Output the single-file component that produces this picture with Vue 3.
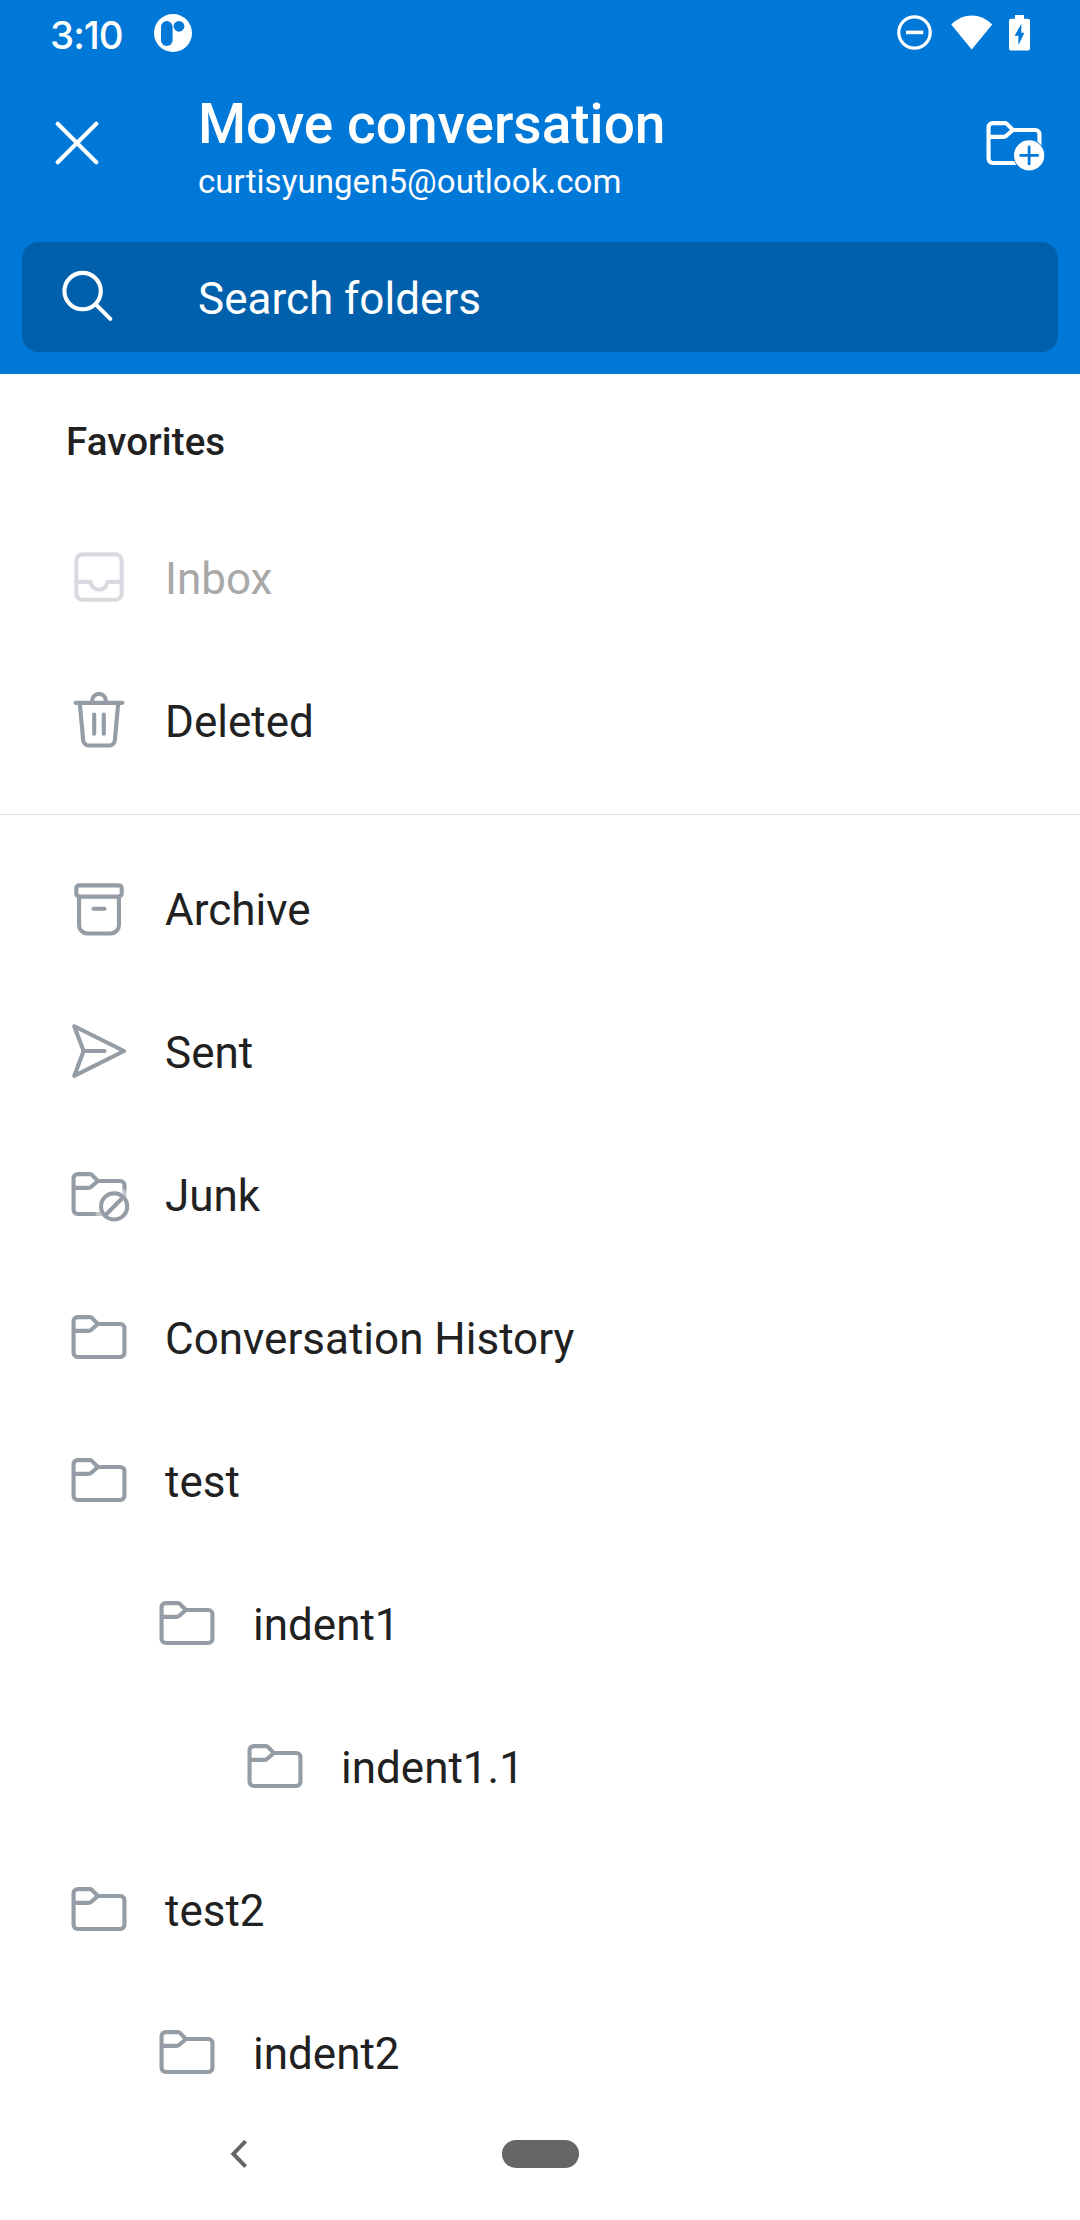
<script setup>
const favorites = [
  { name: 'Inbox', icon: 'inbox', level: 0, disabled: true },
  { name: 'Deleted', icon: 'trash', level: 0 },
]
const folders = [
  { name: 'Archive', icon: 'archive', level: 0 },
  { name: 'Sent', icon: 'sent', level: 0 },
  { name: 'Junk', icon: 'junk', level: 0 },
  { name: 'Conversation History', icon: 'folder', level: 0 },
  { name: 'test', icon: 'folder', level: 0 },
  { name: 'indent1', icon: 'folder', level: 1 },
  { name: 'indent1.1', icon: 'folder', level: 2 },
  { name: 'test2', icon: 'folder', level: 0 },
  { name: 'indent2', icon: 'folder', level: 1 },
]
const groups = [favorites, folders]

const folderPath =
  'M11.6 7.25H19.75a1.5 1.5 0 0 1 1.5 1.5v9a1.5 1.5 0 0 1-1.5 1.5H4.25a1.5 1.5 0 0 1-1.5-1.5V6.25a1.5 1.5 0 0 1 1.5-1.5H8.6a1.2 1.2 0 0 1 .8.3zL9.2 9.35a1.5 1.5 0 0 1-.95.4H2.75'
const paths = {
  inbox: [
    'M6 3.75h12A2.25 2.25 0 0 1 20.25 6v12A2.25 2.25 0 0 1 18 20.25H6A2.25 2.25 0 0 1 3.75 18V6A2.25 2.25 0 0 1 6 3.75z',
    'M3.75 13.75H9a3 2.9 0 0 0 6 0h5.25',
  ],
  trash: [
    'M3.5 5.75h17',
    'M9.5 5.75V5a2.5 2.5 0 0 1 5 0v.75',
    'M5 5.75l1.25 13.7a2 2 0 0 0 2 1.8h7.5a2 2 0 0 0 2-1.8L19 5.75',
    'M10.25 10v7M13.75 10v7',
  ],
  archive: [
    'M4.75 3.75h14.5a1 1 0 0 1 1 1v2.1a1 1 0 0 1-1 1H4.75a1 1 0 0 1-1-1v-2.1a1 1 0 0 1 1-1z',
    'M4.75 7.85v10.4a3 3 0 0 0 3 3h8.5a3 3 0 0 0 3-3V7.85',
    'M10 12.25h4',
  ],
  sent: ['M3 3l18.1 9L3 21.05 6.4 12z', 'M6.4 12h7.6'],
  folder: [folderPath],
}
</script>

<template>
  <div class="screen">
    <header class="header">
      <div class="status">
        <span class="clock">3:10</span>
        <svg class="app-badge" width="38" height="38" viewBox="0 0 38 38">
          <circle cx="19" cy="19" r="19" fill="#fff" />
          <rect x="7" y="7" width="11.6" height="25" rx="5.8" fill="#0078d8" />
          <circle cx="25" cy="12.3" r="5.4" fill="#0078d8" />
        </svg>
        <svg class="status-icons" width="120" height="38" viewBox="896 14 120 38">
          <circle cx="913.5" cy="32.5" r="15.7" fill="none" stroke="#fff" stroke-width="3.2" />
          <path d="M905 32.4h17.3" stroke="#fff" stroke-width="3.6" />
          <path d="M950.2 24.6Q959 15.4 970.7 15.4T991.2 24.6L970.7 49.5z" fill="#fff" />
        </svg>
        <svg class="battery" width="21" height="36" viewBox="0 0 21 36">
          <path
            fill="#fff"
            fill-rule="evenodd"
            d="M6 0h9v3.8h4a2 2 0 0 1 2 2v27.7a2 2 0 0 1-2 2H2a2 2 0 0 1-2-2V5.8a2 2 0 0 1 2-2h4zM12.3 8.8L5.6 20.8H9.4V30.2L15.4 17.8H12.3z"
          />
        </svg>
      </div>

      <div class="toolbar">
        <svg class="close" width="44" height="44" viewBox="-22 -22 44 44">
          <path d="M-19.3-19.3l38.6 38.6M19.3-19.3l-38.6 38.6" />
        </svg>
        <div class="titles">
          <h1>Move conversation</h1>
          <p>curtisyungen5@outlook.com</p>
        </div>
        <svg class="new-folder" width="66" height="66" viewBox="0 0 24 24">
          <mask id="addGap">
            <rect width="24" height="24" fill="#fff" />
            <circle cx="17.5" cy="16.5" r="6.5" fill="#000" />
          </mask>
          <path :d="folderPath" mask="url(#addGap)" />
          <circle class="disc" cx="17.5" cy="16.5" r="5.5" />
          <path class="plus" d="M17.5 13.4v6.2M14.4 16.5h6.2" />
        </svg>
      </div>

      <div class="search">
        <svg width="54" height="54" viewBox="60 268 54 54">
          <circle cx="82.6" cy="291.1" r="18.2" />
          <path d="M96 304.6l14.3 14.3" />
        </svg>
        <span>Search folders</span>
      </div>
    </header>

    <main class="list">
      <h2>Favorites</h2>
      <section v-for="(group, g) in groups" :key="g" class="group">
        <div
          v-for="item in group"
          :key="item.name"
          class="row"
          :class="['level-' + item.level, { disabled: item.disabled }]"
        >
          <svg class="icon" width="66" height="66" viewBox="0 0 24 24">
            <template v-if="item.icon === 'junk'">
              <mask id="junkGap">
                <rect width="24" height="24" fill="#fff" />
                <circle cx="17.5" cy="16.5" r="6.4" fill="#000" />
              </mask>
              <path :d="folderPath" mask="url(#junkGap)" />
              <circle cx="17.5" cy="16.5" r="4.75" />
              <path d="M14.2 19.8l6.6-6.6" />
            </template>
            <template v-else>
              <path v-for="d in paths[item.icon]" :key="d" :d="d" />
            </template>
          </svg>
          <span>{{ item.name }}</span>
        </div>
      </section>
    </main>

    <nav class="navbar">
      <svg width="18" height="30" viewBox="0 0 18 30">
        <path d="M15.6 2.2L3.4 14.9l12.2 12.7" fill="none" stroke="#666" stroke-width="4" />
      </svg>
      <div class="home"></div>
    </nav>
  </div>
</template>

<style>
body {
  margin: 0;
  background: #fff;
}
</style>

<style scoped>
.screen {
  width: 1080px;
  height: 2220px;
  display: flex;
  flex-direction: column;
  overflow: hidden;
  background: #fff;
  color: #212121;
  font-family: Roboto, sans-serif;
}
.header {
  box-sizing: border-box;
  height: 374px;
  flex: none;
  background: #0078d8;
  color: #fff;
}
.status {
  box-sizing: border-box;
  height: 66px;
  padding: 14px 50px 0 50px;
  display: flex;
  align-items: flex-start;
}
.clock {
  width: 104px;
  font: 500 38.5px/42px Inter, sans-serif;
  letter-spacing: -1px;
}
.status-icons {
  margin-left: auto;
}
.battery {
  margin: 1px 0 0 -8px;
}
.toolbar {
  height: 176px;
  display: flex;
  align-items: flex-start;
}
.close {
  margin: 55px 0 0 55px;
}
.close path,
.search svg {
  fill: none;
  stroke: #fff;
  stroke-width: 4.1;
  stroke-linecap: round;
}
.titles {
  margin: 25px 0 0 99px;
}
h1,
h2,
p {
  margin: 0;
}
h1 {
  font-size: 55px;
  font-weight: 500;
  line-height: 66px;
}
p {
  font-size: 33px;
  line-height: 40px;
  margin-top: 5px;
  letter-spacing: 0.07px;
}
.new-folder {
  margin: 44px 33px 0 auto;
  fill: none;
  stroke: #fff;
  stroke-width: 1.5;
}
.new-folder .disc {
  fill: #fff;
  stroke: none;
}
.new-folder .plus {
  stroke: #0078d8;
  stroke-width: 1;
  stroke-linecap: round;
}
.search {
  box-sizing: border-box;
  height: 110px;
  margin: 0 22px;
  padding: 4px 0 0 38px;
  border-radius: 16.5px;
  background: #0060ac;
  display: flex;
  align-items: center;
  font-size: 44px;
}
.search svg {
  margin: -8px 84px 0 0;
}
.list {
  flex: 1;
  min-height: 0;
  overflow: hidden;
}
h2 {
  box-sizing: border-box;
  height: 132px;
  padding-left: 66px;
  font-size: 38.5px;
  font-weight: 500;
  line-height: 136px;
  letter-spacing: 0.1px;
}
.group + .group {
  margin-top: 22px;
  padding-top: 22px;
  border-top: 1px solid #e0e0e0;
}
.row {
  height: 143px;
  padding-left: 66px;
  display: flex;
  align-items: flex-start;
  font-size: 44px;
  line-height: 147px;
}
.level-1 {
  padding-left: 154px;
}
.level-2 {
  padding-left: 242px;
}
.icon {
  margin: 38px 33px 0 0;
  flex: none;
  fill: none;
  stroke: #949ca5;
  stroke-width: 1.5;
  stroke-linecap: round;
  stroke-linejoin: round;
}
.disabled {
  color: #a8a8a8;
}
.disabled .icon {
  stroke: #d8dadf;
}
.navbar {
  height: 132px;
  flex: none;
  display: flex;
  align-items: center;
  padding-left: 230px;
}
.home {
  width: 77px;
  height: 28px;
  margin-left: 254px;
  border-radius: 14px;
  background: #666;
}
</style>
